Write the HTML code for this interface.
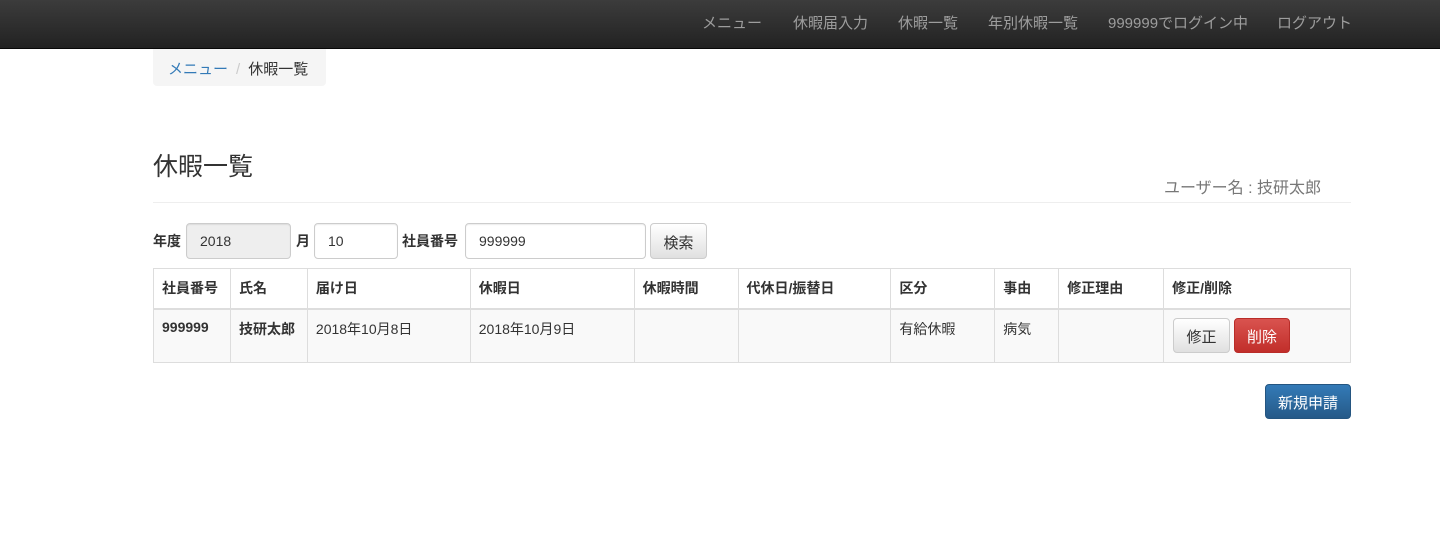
<!DOCTYPE html>
<html><head><meta charset="utf-8"><style>
*{box-sizing:border-box;margin:0;padding:0}
body{width:1440px;height:533px;background:#fff;font-family:"Liberation Sans","Noto Sans CJK JP",sans-serif;font-size:14px;color:#333;position:relative;overflow:hidden}
.nav{position:absolute;left:0;top:0;width:1440px;height:49px;background:linear-gradient(#3c3c3c,#222);border-bottom:1px solid #080808}
.nav a{position:absolute;top:12px;color:#9d9d9d;font-size:15px;text-decoration:none}
.bc{position:absolute;left:153px;top:49px;width:173px;height:37px;background:#f5f5f5;border-radius:0 0 4px 4px;padding:9px 15px;font-size:15px}
.bc a{color:#337ab7}
.abs{position:absolute}
.inp{position:absolute;height:36px;border:1px solid #ccc;border-radius:4px;padding:9px 13px;font-size:14px;box-shadow:inset 0 1px 1px rgba(0,0,0,.075)}
table{position:absolute;left:153px;top:268px;width:1198px;border-collapse:collapse}
td,th{border:1px solid #ddd;padding:9px 8px;text-align:left;vertical-align:top;font-size:14px}
th{height:40px;border-bottom:2px solid #ddd}
tbody td{height:54px;background:#f9f9f9}
.btn{position:absolute;border-radius:4px;font-size:15px;text-align:center}
</style></head><body>
<div class="nav">
<a style="left:702px">メニュー</a><a style="left:793px">休暇届入力</a><a style="left:898px">休暇一覧</a><a style="left:988px">年別休暇一覧</a><a style="left:1108px">999999でログイン中</a><a style="left:1277px">ログアウト</a>
</div>
<div class="bc"><a>メニュー</a><span style="color:#ccc;padding:0 8px">/</span>休暇一覧</div>
<div class="abs" style="left:153px;top:147px;font-size:25px">休暇一覧</div>
<div class="abs" style="left:1164px;top:174px;font-size:16px;color:#777">ユーザー名 : 技研太郎</div>
<div class="abs" style="left:153px;top:202px;width:1198px;border-top:1px solid #eee"></div>
<div class="abs" style="left:153px;top:231px;font-weight:bold">年度</div>
<div class="inp" style="left:186px;top:223px;width:105px;background:#eee">2018</div>
<div class="abs" style="left:296px;top:231px;font-weight:bold">月</div>
<div class="inp" style="left:314px;top:223px;width:84px">10</div>
<div class="abs" style="left:402px;top:231px;font-weight:bold">社員番号</div>
<div class="inp" style="left:465px;top:223px;width:181px">999999</div>
<div class="btn" style="left:650px;top:223px;width:57px;height:36px;border:1px solid #ccc;background:linear-gradient(#fff,#e0e0e0);padding-top:8px">検索</div>
<table>
<colgroup><col style="width:77px"><col style="width:77px"><col style="width:163px"><col style="width:164px"><col style="width:104px"><col style="width:153px"><col style="width:104px"><col style="width:64px"><col style="width:105px"><col style="width:187px"></colgroup>
<thead><tr><th>社員番号</th><th>氏名</th><th>届け日</th><th>休暇日</th><th>休暇時間</th><th>代休日/振替日</th><th>区分</th><th>事由</th><th>修正理由</th><th>修正/削除</th></tr></thead>
<tbody><tr><td style="font-weight:bold">999999</td><td style="font-weight:bold">技研太郎</td><td>2018年10月8日</td><td>2018年10月9日</td><td></td><td></td><td>有給休暇</td><td>病気</td><td></td><td></td></tr></tbody>
</table>
<div class="btn" style="left:1173px;top:318px;width:57px;height:35px;border:1px solid #ccc;background:linear-gradient(#fff,#e0e0e0);padding-top:7px">修正</div>
<div class="btn" style="left:1234px;top:318px;width:56px;height:35px;border:1px solid #b92c28;background:linear-gradient(#d9534f,#c12e2a);color:#fff;padding-top:7px">削除</div>
<div class="btn" style="left:1265px;top:384px;width:86px;height:35px;border:1px solid #245580;background:linear-gradient(#337ab7,#265a88);color:#fff;padding-top:7px">新規申請</div>
</body></html>
